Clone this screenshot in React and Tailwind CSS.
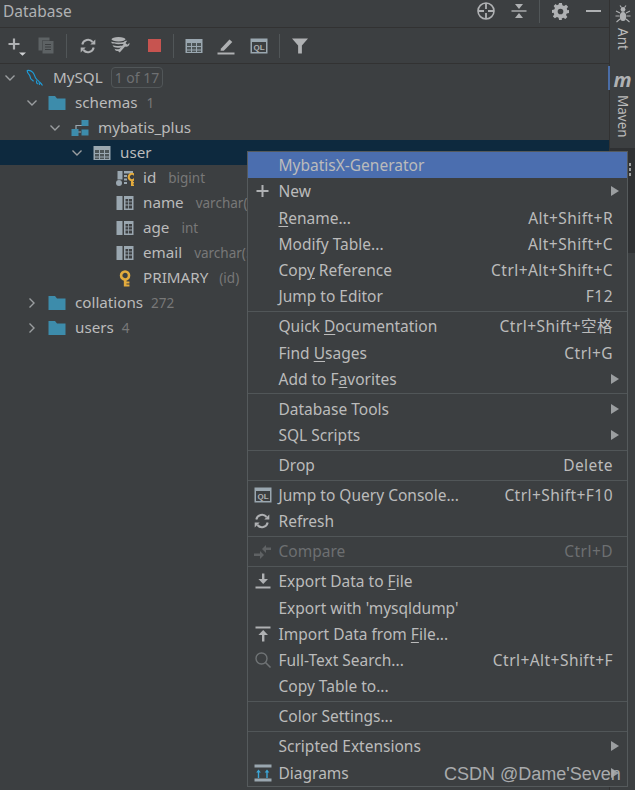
import React from 'react';

const Ic = ({ w = 18, h = 18, vb = '0 0 18 18', children, className = '' }) => (
  <svg width={w} height={h} viewBox={vb} fill="none" className={`shrink-0 ${className}`}>
    {children}
  </svg>
);

const TableIcon = () => (
  <Ic>
    <rect x="0.5" y="2" width="17" height="14" fill="#9aa7b0" />
    <path d="M2 6h4v3H2zM7 6h4v3H7zM12 6h4v3h-4zM2 10h4v2.5H2zM7 10h4v2.5H7zM12 10h4v2.5h-4zM2 13.5h4V15H2zM7 13.5h4V15H7zM12 13.5h4V15h-4z" fill="#4d5557" />
  </Ic>
);

const ColumnIcon = () => (
  <Ic>
    <rect x="0.5" y="2" width="6" height="14" fill="#9aa7b0" />
    <path d="M8 2h9.5v14H8z" fill="#9aa7b0" />
    <path d="M9.5 5h2.7v2.4H9.5zM13 5h3v2.4h-3zM9.5 8.2h2.7v2.4H9.5zM13 8.2h3v2.4h-3zM9.5 11.4h2.7v3H9.5zM13 11.4h3v3h-3z" fill="#3c3f41" />
  </Ic>
);

const KeyShape = ({ x = 0, y = 0, s = 1 }) => (
  <g transform={`translate(${x} ${y}) scale(${s})`}>
    <circle cx="5.5" cy="5" r="3.6" stroke="#e3ab3d" strokeWidth="2.4" />
    <path d="M4.4 8.5h2.4V15H4.4zM6.5 10.5h3v1.8h-3zM6.5 13.2h3V15h-3z" fill="#e3ab3d" />
  </g>
);

const KeyColumnIcon = () => (
  <Ic>
    <rect x="1.5" y="2" width="5" height="8.5" fill="#9aa7b0" />
    <circle cx="3" cy="14" r="3" fill="#9aa7b0" />
    <path d="M8 2h9v2.5H8zM8 6h3v2H8zM8 9.5h3v2H8zM8 13h3v2H8z" fill="#9aa7b0" />
    <KeyShape x="11" y="3.5" s="0.9" />
  </Ic>
);

const KeyIcon = () => (
  <Ic>
    <KeyShape x="3" y="1" s="1.1" />
  </Ic>
);

const FolderIcon = () => (
  <Ic>
    <path d="M0.5 2h6.5l2 2.5h8.5V16H0.5z" fill="#3d8cab" />
  </Ic>
);

const SchemaIcon = () => (
  <Ic>
    <path d="M5 11V6.5h6" stroke="#9aa7b0" strokeWidth="1.2" />
    <path d="M5 10v3h5" stroke="#9aa7b0" strokeWidth="1.2" />
    <rect x="0.5" y="10" width="7" height="7" fill="#3d8cab" />
    <rect x="10.5" y="1" width="7" height="6" fill="#3d8cab" />
    <rect x="10.5" y="10.5" width="7" height="6" fill="#3d8cab" />
  </Ic>
);

const MysqlIcon = () => (
  <Ic>
    <path d="M1 1.5c2.2-.6 4.3.2 5.8 1.8 1.7 1.8 1.8 4 3 6 .9 1.5 2.5 2.5 3.7 3.5" stroke="#1e9cd8" strokeWidth="1.2" />
    <path d="M1 1.5c.2 2 1.3 3.3 2.5 4.7.9 1.2.6 2.5 1.5 3.8.7 1 1.7 1.2 2.5 2.3" stroke="#1e9cd8" strokeWidth="1.2" />
    <path d="M10.5 11.5c-.3 1.5.3 2.8 1.2 3.7M13.5 13c.8.7 2 1.8 3 3.5M13 13.5l.5 2.5" stroke="#1e9cd8" strokeWidth="1.1" />
  </Ic>
);

const RefreshIcon = ({ c = '#afb1b3' }) => (
  <Ic w={16} h={16} vb="0 0 16 16">
    <path d="M2.3 6.5A5.9 5.9 0 0 1 12.6 4" stroke={c} strokeWidth="2" />
    <path d="M10.3 6.4h5V1.5z" fill={c} />
    <path d="M13.7 9.5A5.9 5.9 0 0 1 3.4 12" stroke={c} strokeWidth="2" />
    <path d="M5.7 9.6h-5v4.9z" fill={c} />
  </Ic>
);

const QlIcon = () => (
  <Ic w={18} h={16} vb="0 0 18 16">
    <rect x="0.5" y="0.5" width="17" height="15" fill="#9aa7b0" />
    <rect x="2" y="4" width="14" height="10" fill="#3c3f41" />
    <text x="9" y="12" textAnchor="middle" fontSize="8" fontWeight="700" fill="#afb1b3" fontFamily="'Liberation Sans', sans-serif">QL</text>
  </Ic>
);

const Chevron = ({ open }) => (
  <svg width="12" height="12" viewBox="0 0 12 12" fill="none" className="shrink-0">
    <path d={open ? 'M1.5 3.5 6 8l4.5-4.5' : 'M3.5 1.5 8 6l-4.5 4.5'} stroke="#9b9ea0" strokeWidth="1.4" />
  </svg>
);

const Toolbar = () => (
  <div className="h-[36px] flex items-center border-b border-[#323232] shrink-0">
    <div className="w-[66px] shrink-0 flex items-center pl-[7px] gap-[11px]">
      <Ic w={20} h={20} vb="0 0 20 20">
        <path d="M1.5 8h11M7 2.5v11" stroke="#afb1b3" strokeWidth="2.2" />
        <path d="M12 16.5h7l-3.5 3.2z" fill="#cfd1d3" />
      </Ic>
      <Ic w={16} h={17} vb="0 0 16 17">
        <path d="M0.5 0.5h11v3H4v10H0.5z" fill="#5d6264" />
        <rect x="4.5" y="4" width="11" height="12.5" fill="#5d6264" />
        <path d="M7 7.5h6M7 10h6M7 12.5h6" stroke="#3c3f41" strokeWidth="1" />
      </Ic>
    </div>
    <div className="w-px h-[24px] bg-[#515658] shrink-0" />
    <div className="w-[106px] shrink-0 flex items-center pl-[13px] gap-[15px]">
      <RefreshIcon />
      <Ic w={20} h={19} vb="0 0 20 18">
        <ellipse cx="7.5" cy="2.7" rx="7" ry="2.2" fill="#afb1b3" />
        <path d="M.5 5c2 1.4 12 1.4 14 0v1.6c-2 1.6-12 1.6-14 0zM1.5 8.4c2 1.2 9 1.4 11 .4l-1 2c-2 .6-7 .4-9-.6zM3.5 12.2c1 .7 4 .8 6 .5l-.5 1.6c-1.3.3-3.4.2-4.5-.4z" fill="#afb1b3" />
        <path d="M18.5 6.3a3.3 3.3 0 0 1-4.4 3.7l-5.4 6-2-1.8 5.6-5.6a3.3 3.3 0 0 1 4-4.3L14.4 6.5l2 1.7z" fill="#afb1b3" />
      </Ic>
      <div className="w-[13px] h-[13px] bg-[#c75450] ml-[2px]" />
    </div>
    <div className="w-px h-[24px] bg-[#515658] shrink-0" />
    <div className="w-[105px] shrink-0 flex items-center pl-[11px] gap-[14px]">
      <TableIcon />
      <Ic w={18} h={18} vb="0 0 18 18">
        <path d="M4 11.5 12.5 2.5l2.8 2.6-8.5 8.6H3.5z" fill="#afb1b3" />
        <path d="M0.5 16.5h17" stroke="#afb1b3" strokeWidth="2" />
      </Ic>
      <div className="ml-[1px] flex"><QlIcon /></div>
    </div>
    <div className="w-px h-[24px] bg-[#515658] shrink-0" />
    <div className="pl-[12px]">
      <Ic w={16} h={16} vb="0 0 17 16">
        <path d="M0 0h17L10.5 7.5V16h-4V7.5z" fill="#afb1b3" />
      </Ic>
    </div>
  </div>
);

const Header = () => (
  <div className="h-[28px] flex items-center border-b border-[#323232] shrink-0 pl-[3px] pb-[5px]">
    <span className="text-[15.5px] text-[#afb1b3] flex-1 pt-[2px]">Database</span>
    <div className="flex items-center mr-[8px]">
      <Ic w={18} h={18} vb="0 0 18 18" className="mr-[16px]">
        <circle cx="9" cy="9" r="8" stroke="#afb1b3" strokeWidth="1.6" />
        <path d="M9 1v6M9 11v6M1 9h6M11 9h6" stroke="#afb1b3" strokeWidth="1.8" />
      </Ic>
      <Ic w={16} h={16} vb="0 0 16 16" className="mr-[12px]">
        <path d="M.5 8h15" stroke="#afb1b3" strokeWidth="1.4" />
        <path d="M4 1h8L8 6zM4 15h8l-4-5z" fill="#afb1b3" />
      </Ic>
      <div className="w-px h-[24px] bg-[#515658] mr-[12px]" />
      <Ic w={17} h={17} vb="0 0 24 24" className="mr-[17px]">
        <path fillRule="evenodd" clipRule="evenodd" d="M10 0h4l.7 3.3 2.3 1 2.9-1.9 2.8 2.8-1.9 2.9 1 2.3L24 10v4l-3.2.7-1 2.3 1.9 2.9-2.8 2.8-2.9-1.9-2.3 1L14 24h-4l-.7-3.2-2.3-1-2.9 1.9-2.8-2.8 1.9-2.9-1-2.3L0 14v-4l3.2-.7 1-2.3-1.9-2.9 2.8-2.8L7 3.2l2.3-1zM12 8a4 4 0 1 0 0 8 4 4 0 0 0 0-8z" fill="#afb1b3" />
      </Ic>
      <div className="w-[15px] h-[2px] bg-[#afb1b3]" />
    </div>
  </div>
);

const rows = [
  { pad: 'pl-[4px]', chev: 'open', icon: <MysqlIcon />, name: 'MySQL', badge: '1 of 17' },
  { pad: 'pl-[26px]', chev: 'open', icon: <FolderIcon />, name: 'schemas', hint: '1', gap: 'ml-[9px]' },
  { pad: 'pl-[49px]', chev: 'open', icon: <SchemaIcon />, name: 'mybatis_plus' },
  { pad: 'pl-[71px]', chev: 'open', icon: <TableIcon />, name: 'user', selected: true },
  { pad: 'pl-[94px]', icon: <KeyColumnIcon />, name: 'id', hint: 'bigint', gap: 'ml-[12px]' },
  { pad: 'pl-[94px]', icon: <ColumnIcon />, name: 'name', hint: 'varchar(255)', gap: 'ml-[12px]' },
  { pad: 'pl-[94px]', icon: <ColumnIcon />, name: 'age', hint: 'int', gap: 'ml-[12px]' },
  { pad: 'pl-[94px]', icon: <ColumnIcon />, name: 'email', hint: 'varchar(50)', gap: 'ml-[12px]' },
  { pad: 'pl-[94px]', icon: <KeyIcon />, name: 'PRIMARY', hint: '(id)', gap: 'ml-[11px]' },
  { pad: 'pl-[26px]', chev: 'closed', icon: <FolderIcon />, name: 'collations', hint: '272', gap: 'ml-[8px]' },
  { pad: 'pl-[26px]', chev: 'closed', icon: <FolderIcon />, name: 'users', hint: '4', gap: 'ml-[8px]' },
];

const TreeRow = ({ row }) => (
  <div className={`h-[25px] flex items-center whitespace-nowrap overflow-hidden ${row.pad} ${row.selected ? 'bg-[#0d293e]' : ''}`}>
    <div className="w-[12px] shrink-0 mr-[10px] flex">
      {row.chev && <Chevron open={row.chev === 'open'} />}
    </div>
    {row.icon}
    <span className="ml-[9px] text-[15.2px] text-[#bbbbbb]">{row.name}</span>
    {row.badge && (
      <span className="ml-[8px] border border-[#515658] rounded-[4px] h-[21px] px-[3px] flex items-center text-[14px] text-[#6e7072]">{row.badge}</span>
    )}
    {row.hint && <span className={`${row.gap} pt-px text-[13.5px] text-[#787878]`}>{row.hint}</span>}
  </div>
);

const Tree = () => (
  <div className="pt-px">
    {rows.map((row) => (
      <TreeRow key={row.name} row={row} />
    ))}
  </div>
);

const Arrow = () => (
  <svg width="8" height="10" viewBox="0 0 8 10" className="shrink-0">
    <path d="M0 0l8 5-8 5z" fill="#9b9ea0" />
  </svg>
);

const MenuItem = ({ icon, label, shortcut, submenu, active, disabled }) => (
  <div className={`h-[26.25px] flex items-center whitespace-nowrap ${active ? 'bg-[#4b6eaf]' : ''} ${disabled ? 'text-[#6d6f71]' : 'text-[#bbbbbb]'}`}>
    <div className="w-[30.5px] pl-[6px] shrink-0 flex items-center">{icon}</div>
    <span className="flex-1 pt-px">{label}</span>
    {shortcut && <span className="mr-[14px] pt-px tracking-[0.45px]">{shortcut}</span>}
    {submenu && <div className="mr-[8px] flex"><Arrow /></div>}
  </div>
);

const MenuSep = () => (
  <div className="h-[3.75px] flex items-center">
    <div className="h-px w-full bg-[#515658]" />
  </div>
);

const Mn = ({ children }) => <u className="underline-offset-2">{children}</u>;

const SmallIcon = ({ children }) => (
  <Ic w={18} h={18} vb="0 0 18 18">{children}</Ic>
);

const ContextMenu = () => (
  <div className="absolute left-[247px] top-[151px] w-[381px] h-[636px] bg-[#3c3f41] border border-[#555a5c] z-10">
    <MenuItem label="MybatisX-Generator" active />
    <MenuItem
      label="New"
      submenu
      icon={<SmallIcon><path d="M2.5 9h12M8.5 3v12" stroke="#afb1b3" strokeWidth="2" /></SmallIcon>}
    />
    <MenuItem label={<><Mn>R</Mn>ename...</>} shortcut="Alt+Shift+R" />
    <MenuItem label="Modify Table..." shortcut="Alt+Shift+C" />
    <MenuItem label={<>Cop<Mn>y</Mn> Reference</>} shortcut="Ctrl+Alt+Shift+C" />
    <MenuItem label="Jump to Editor" shortcut="F12" />
    <MenuSep />
    <MenuItem label={<>Quick <Mn>D</Mn>ocumentation</>} shortcut="Ctrl+Shift+空格" />
    <MenuItem label={<>Find <Mn>U</Mn>sages</>} shortcut="Ctrl+G" />
    <MenuItem label={<>Add to F<Mn>a</Mn>vorites</>} submenu />
    <MenuSep />
    <MenuItem label="Database Tools" submenu />
    <MenuItem label="SQL Scripts" submenu />
    <MenuSep />
    <MenuItem label="Drop" shortcut="Delete" />
    <MenuSep />
    <MenuItem label="Jump to Query Console..." shortcut="Ctrl+Shift+F10" icon={<QlIcon />} />
    <MenuItem label="Refresh" icon={<RefreshIcon />} />
    <MenuSep />
    <MenuItem
      label="Compare"
      shortcut="Ctrl+D"
      disabled
      icon={
        <SmallIcon>
          <path d="M0 11.5h6V9l4 4-4 4v-3H0zM17 5.5h-5V3L8 7l4 4V8h5z" fill="#5f6264" />
        </SmallIcon>
      }
    />
    <MenuSep />
    <MenuItem
      label={<>Export Data to <Mn>F</Mn>ile</>}
      icon={
        <SmallIcon>
          <path d="M8 1.5h2.4V7H14l-4.8 5-4.8-5H8z" fill="#afb1b3" />
          <path d="M1.5 15.5h15" stroke="#afb1b3" strokeWidth="2" />
        </SmallIcon>
      }
    />
    <MenuItem label="Export with 'mysqldump'" />
    <MenuItem
      label={<>Import Data from <Mn>F</Mn>ile...</>}
      icon={
        <SmallIcon>
          <path d="M1.5 2.5h15" stroke="#afb1b3" strokeWidth="2" />
          <path d="M8 16.5h2.4V10H14L9.2 5 4.4 10H8z" fill="#afb1b3" />
        </SmallIcon>
      }
    />
    <MenuItem
      label="Full-Text Search..."
      icon={
        <SmallIcon>
          <circle cx="7.5" cy="7.5" r="5.5" stroke="#6f7375" strokeWidth="1.4" />
          <path d="M11.5 11.5 16.5 16.5" stroke="#6f7375" strokeWidth="1.6" />
        </SmallIcon>
      }
      shortcut="Ctrl+Alt+Shift+F"
    />
    <MenuItem label="Copy Table to..." />
    <MenuSep />
    <MenuItem label="Color Settings..." />
    <MenuSep />
    <MenuItem label="Scripted Extensions" submenu />
    <MenuItem
      label="Diagrams"
      submenu
      icon={
        <SmallIcon>
          <path d="M0.5 0.5h17v3h-17zM0.5 14.5h17v3h-17z" fill="#9aa7b0" />
          <path d="M4.5 14V7M13 14V7" stroke="#3aa6d8" strokeWidth="1.4" />
          <path d="M2.2 8.5 4.5 5.5l2.3 3zM10.7 8.5 13 5.5l2.3 3z" fill="#3aa6d8" />
        </SmallIcon>
      }
    />
  </div>
);

const SideBar = () => (
  <div className="w-[26px] shrink-0 flex flex-col border-l border-[#323232] relative">
    <div className="absolute left-[-2px] top-[66px] w-[2px] h-[24px] bg-[#4a6da7]" />
    <div className="h-[148px] flex flex-col items-center shrink-0 pt-[5px]">
      <Ic w={16} h={18} vb="0 0 16 18">
        <ellipse cx="8" cy="11.5" rx="3.2" ry="4.5" fill="#afb1b3" />
        <circle cx="8" cy="4.5" r="2.4" fill="#afb1b3" />
        <path d="M5 8 1 6M11 8l4-2M4.5 11H.5M11.5 11h4M5 14l-3.5 3M11 14l3.5 3M6.5 2.5 5 .5M9.5 2.5 11 .5" stroke="#afb1b3" strokeWidth="1.1" />
      </Ic>
      <span className="[writing-mode:vertical-rl] text-[13.5px] text-[#bbbbbb] mt-[5px] leading-none">Ant</span>
      <span className="text-[20px] font-bold italic text-[#afb1b3] leading-none mt-[20px]">m</span>
      <span className="[writing-mode:vertical-rl] text-[13.5px] text-[#bbbbbb] mt-[5px] leading-none">Maven</span>
    </div>
    <div className="h-[105px] bg-[#2f3133] shrink-0 pt-[15px] pl-[19px] flex flex-col gap-[2px]">
      <div className="w-[2px] h-[3px] bg-[#9b9ea0]" />
      <div className="w-[2px] h-[3px] bg-[#9b9ea0]" />
      <div className="w-[2px] h-[3px] bg-[#9b9ea0]" />
    </div>
    <div className="flex-1" />
  </div>
);

export default function App() {
  return (
    <div className="relative w-[635px] h-[790px] overflow-hidden flex bg-[#3c3f41] text-[15.5px] font-['Noto_Sans','Noto_Sans_CJK_SC',sans-serif]">
      <div className="flex-1 min-w-0 flex flex-col">
        <Header />
        <Toolbar />
        <Tree />
      </div>
      <SideBar />
      <ContextMenu />
      <div className="absolute left-[444px] top-[761px] z-20 text-[18px] text-[#a9abad] font-['Liberation_Sans',sans-serif] whitespace-nowrap">
        CSDN @Dame'Seven
      </div>
    </div>
  );
}
